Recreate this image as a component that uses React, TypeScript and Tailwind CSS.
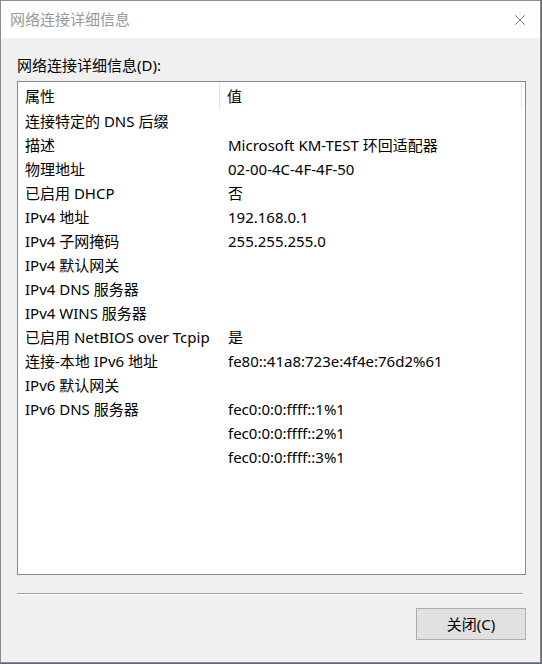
import { X } from 'lucide-react';

const rows: [string, string][] = [
  ['连接特定的 DNS 后缀', ''],
  ['描述', 'Microsoft KM-TEST 环回适配器'],
  ['物理地址', '02-00-4C-4F-4F-50'],
  ['已启用 DHCP', '否'],
  ['IPv4 地址', '192.168.0.1'],
  ['IPv4 子网掩码', '255.255.255.0'],
  ['IPv4 默认网关', ''],
  ['IPv4 DNS 服务器', ''],
  ['IPv4 WINS 服务器', ''],
  ['已启用 NetBIOS over Tcpip', '是'],
  ['连接-本地 IPv6 地址', 'fe80::41a8:723e:4f4e:76d2%61'],
  ['IPv6 默认网关', ''],
  ['IPv6 DNS 服务器', 'fec0:0:0:ffff::1%1'],
  ['', 'fec0:0:0:ffff::2%1'],
  ['', 'fec0:0:0:ffff::3%1'],
];

const font = "font-['Noto_Sans','Noto_Sans_CJK_SC',sans-serif]";

export default function App() {
  return (
    <div className={`w-[542px] h-[664px] bg-[#5a6a7a] ${font}`}>
      <div className="w-[541px] h-[663px] border border-[#8c8c8c] bg-[#f0f0f0] flex flex-col">
        {/* title bar */}
        <div className="h-[37px] bg-white flex items-center justify-between pl-[9px] pr-[11px]">
          <span className="text-[15px] text-[#999999]">网络连接详细信息</span>
          <X size={18} strokeWidth={1} className="text-[#555]" />
        </div>

        <div className="flex-1 flex flex-col px-[16px]">
          <div className="mt-[13px] h-[30px] text-[15px] text-black leading-[28px]">网络连接详细信息(D):</div>

          <div className="w-[509px] h-[494px] border border-[#828790] bg-white text-[15px] text-black pt-[1px]">
            <div className="flex h-[26px] items-center">
              <div className="w-[202px] h-full flex items-center pl-[7px] border-r border-[#e5e5e5]">属性</div>
              <div className="w-[302px] h-full flex items-center pl-[7px] border-r border-[#e5e5e5]">值</div>
            </div>
            {rows.map(([k, v], i) => (
              <div key={i} className="flex h-6 items-center whitespace-nowrap">
                <div className="w-[202px] pl-[7px]">{k}</div>
                <div className="pl-[8px]">{v}</div>
              </div>
            ))}
          </div>

          <div className="mt-[18px] w-[506px] border-t border-[#a0a0a0] border-b border-b-white" />

          <div className="flex justify-end mt-[13px]">
            <button className="w-[110px] h-[32px] mr-[-2px] bg-[#e1e1e1] border border-[#adadad] text-[15px] text-black">
              关闭(C)
            </button>
          </div>
        </div>
      </div>
    </div>
  );
}
